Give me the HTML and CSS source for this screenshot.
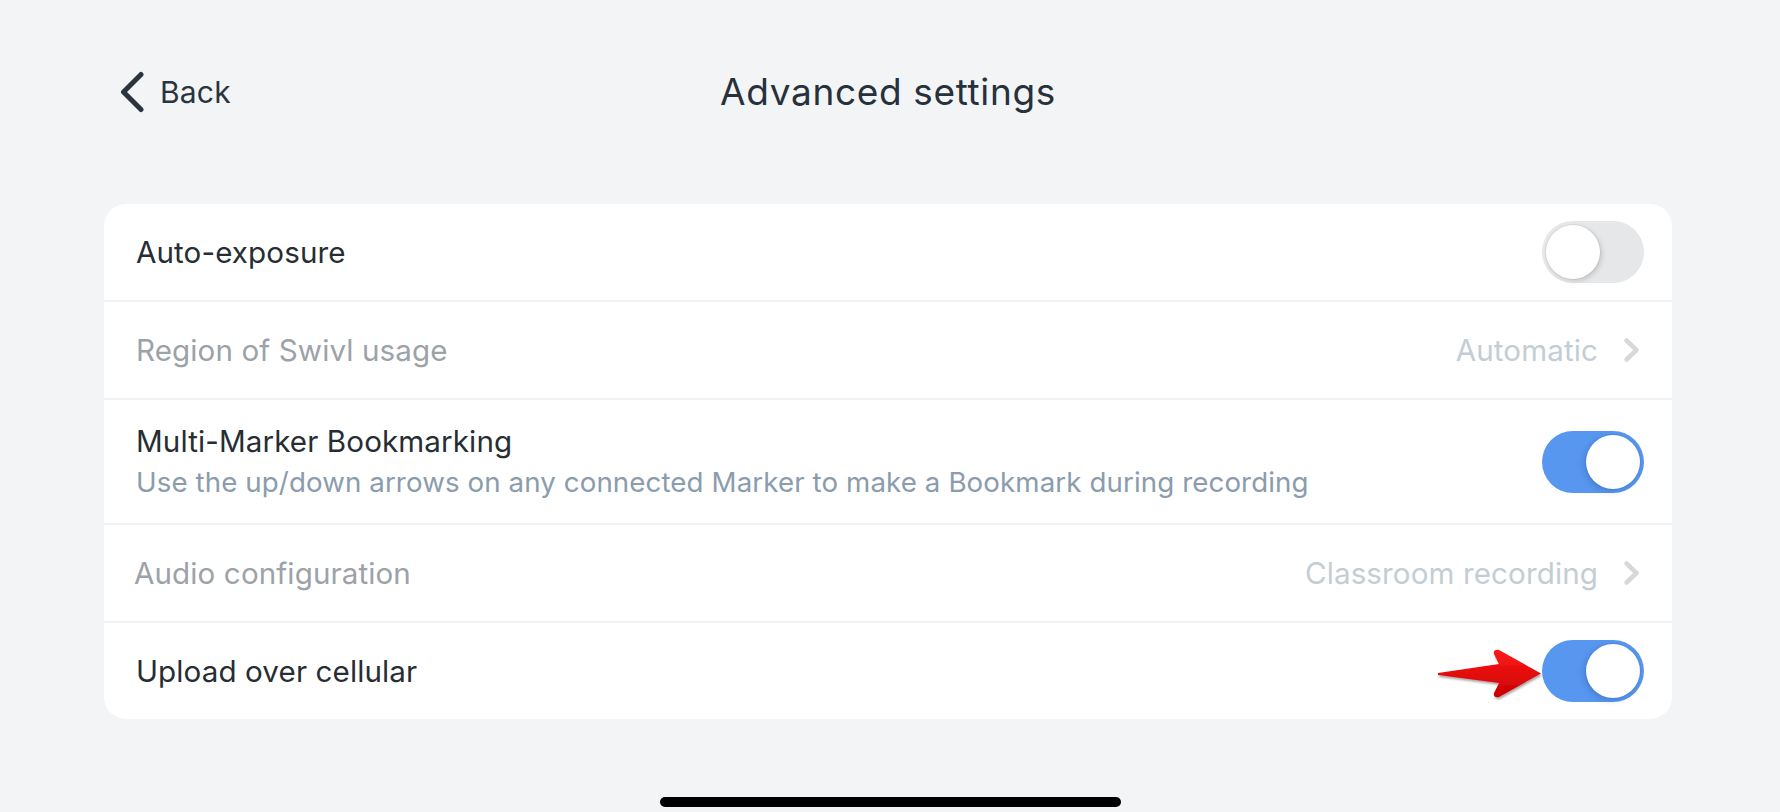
FILE: index.html
```html
<!DOCTYPE html>
<html lang="en">
<head>
<meta charset="utf-8">
<title>Advanced settings</title>
<link rel="stylesheet" href="styles.css">
</head>
<body>
<div class="screen">
  <header class="topbar">
    <a class="back" href="#">
      <svg class="back-icon" width="26" height="42" viewBox="0 0 26 42"><path d="M22 3.5 L4.5 21 L22 38.5" fill="none" stroke="#2a343e" stroke-width="5" stroke-linecap="round" stroke-linejoin="round"/></svg>
      <span>Back</span>
    </a>
    <h1 class="title">Advanced settings</h1>
    <div class="spacer"></div>
  </header>

  <section class="card">
    <div class="row">
      <div class="label">Auto-exposure</div>
      <div class="toggle off"><span class="knob"></span></div>
    </div>
    <div class="row">
      <div class="label muted">Region of Swivl usage</div>
      <div class="value">
        <span>Automatic</span>
        <svg class="chev" width="18" height="26" viewBox="0 0 18 26"><path d="M3.5 3.5 L13.5 13 L3.5 22.5" fill="none" stroke="#d5d9dc" stroke-width="4.5" stroke-linecap="round" stroke-linejoin="round"/></svg>
      </div>
    </div>
    <div class="row tall">
      <div class="text">
        <div class="label">Multi-Marker Bookmarking</div>
        <div class="sub">Use the up/down arrows on any connected Marker to make a Bookmark during recording</div>
      </div>
      <div class="toggle on"><span class="knob"></span></div>
    </div>
    <div class="row">
      <div class="label muted shift">Audio configuration</div>
      <div class="value">
        <span>Classroom recording</span>
        <svg class="chev" width="18" height="26" viewBox="0 0 18 26"><path d="M3.5 3.5 L13.5 13 L3.5 22.5" fill="none" stroke="#d5d9dc" stroke-width="4.5" stroke-linecap="round" stroke-linejoin="round"/></svg>
      </div>
    </div>
    <div class="row last">
      <div class="label">Upload over cellular</div>
      <div class="toggle on"><span class="knob"></span></div>
      <svg class="pointer" width="112" height="60" viewBox="0 0 112 60">
        <defs>
          <linearGradient id="rg" x1="0" y1="0" x2="0" y2="1">
            <stop offset="0" stop-color="#ff1a1a"/>
            <stop offset="1" stop-color="#c80000"/>
          </linearGradient>
          <filter id="sh" x="-10%" y="-20%" width="130%" height="150%">
            <feDropShadow dx="1" dy="2" stdDeviation="1.2" flood-color="#000" flood-opacity="0.35"/>
          </filter>
        </defs>
        <path d="M3 28 L64 19 L59 9 Q58 4 64 5 L106 28.5 L64 52 Q58 53 59 48 L64 38 L3 30 Z" fill="url(#rg)" filter="url(#sh)"/>
      </svg>
    </div>
  </section>

  <div class="home-bar"></div>
</div>
</body>
</html>
```

FILE: styles.css
```css
html, body {
  margin: 0;
  padding: 0;
}

body {
  background: #f3f4f6;
  font-family: "Inter", "Noto Sans", "Liberation Sans", sans-serif;
  color: #262d33;
  width: 1780px;
  height: 812px;
  overflow: hidden;
}

.screen {
  display: flex;
  flex-direction: column;
  height: 812px;
}

.topbar {
  height: 183px;
  display: grid;
  grid-template-columns: 1fr auto 1fr;
  align-items: center;
  padding: 0 0 0 119px;
  margin-right: 123px;
}

.back {
  display: flex;
  align-items: center;
  gap: 15px;
  text-decoration: none;
  color: #2a343e;
  font-size: 30px;
  letter-spacing: 0.2px;
}

.back-icon {
  display: block;
}

.title {
  margin: 0;
  font-weight: 400;
  font-size: 37px;
  color: #26313b;
  letter-spacing: 0.65px;
}

.card {
  margin: 21px 108px 0 104px;
  background: #ffffff;
  border-radius: 22px;
  overflow: visible;
}

.row {
  position: relative;
  height: 96px;
  display: flex;
  align-items: center;
  justify-content: space-between;
  padding: 0 28px 0 32px;
  border-bottom: 2px solid #f1f2f4;
}

.row.tall {
  height: 123px;
}

.row.last {
  border-bottom: none;
}

.label {
  font-size: 29.6px;
  line-height: 40px;
  letter-spacing: 0.1px;
}

.label.muted {
  color: #9ca2a8;
}

.label.shift {
  margin-left: -2px;
}

.sub {
  font-size: 27.7px;
  line-height: 42px;
  color: #8a9cad;
  letter-spacing: 0.1px;
}

.value {
  display: flex;
  align-items: center;
  gap: 25px;
  font-size: 29.6px;
  letter-spacing: 0.1px;
  color: #c4cdd5;
  padding-right: 3px;
}

.chev {
  display: block;
}

.toggle {
  position: relative;
  width: 102px;
  height: 62px;
  border-radius: 31px;
  flex: none;
}

.toggle.off {
  background: #e6e7e9;
}

.toggle.on {
  background: #5897ef;
}

.knob {
  position: absolute;
  top: 4px;
  width: 54px;
  height: 54px;
  border-radius: 50%;
  background: #ffffff;
}

.toggle.off .knob {
  left: 4px;
  box-shadow: 0 0 0 1px rgba(0, 0, 0, 0.05), 2px 2px 5px rgba(0, 0, 0, 0.14);
}

.toggle.on .knob {
  right: 4px;
  box-shadow: 0 0 0 1px rgba(40, 90, 170, 0.12), -2px 2px 6px rgba(20, 60, 130, 0.25);
}

.pointer {
  position: absolute;
  right: 125px;
  top: 22px;
}

.home-bar {
  align-self: center;
  width: 461px;
  height: 10px;
  border-radius: 5px;
  background: #000;
  margin-top: 78px;
}
```
